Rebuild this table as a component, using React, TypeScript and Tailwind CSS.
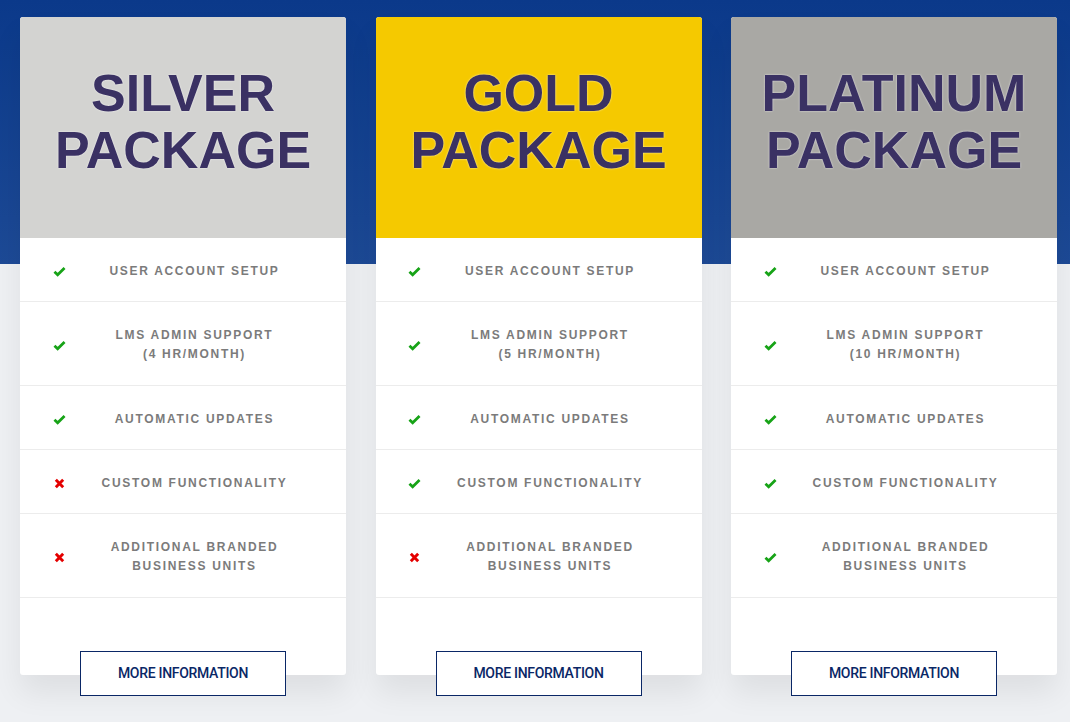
type Feature = { label: string[]; ok: boolean };

const packages = [
  {
    name: 'SILVER',
    bg: 'bg-[#d3d3d1]',
    hours: '4',
    custom: false,
    branded: false,
  },
  {
    name: 'GOLD',
    bg: 'bg-[#f5c900]',
    hours: '5',
    custom: true,
    branded: false,
  },
  {
    name: 'PLATINUM',
    bg: 'bg-[#a9a8a4]',
    hours: '10',
    custom: true,
    branded: true,
  },
];

function CheckIcon() {
  return (
    <svg viewBox="0 0 14 12" className="w-[13px] h-[11px]">
      <path d="M1.5 6.2 L5 9.6 L12.5 2.2" fill="none" stroke="#17a317" strokeWidth="3" strokeLinejoin="miter" />
    </svg>
  );
}

function CrossIcon() {
  return (
    <svg viewBox="0 0 12 12" className="w-[11px] h-[11px]">
      <path d="M2 2 L10 10 M10 2 L2 10" fill="none" stroke="#e40000" strokeWidth="3.2" />
    </svg>
  );
}

function FeatureRow({ feature, tall }: { feature: Feature; tall: boolean }) {
  return (
    <div
      className={`flex items-center pl-[30px] pr-[25px] pt-[3px] border-b border-[#ececec] ${
        tall ? 'h-[84px]' : 'h-[64px]'
      }`}
    >
      <div className="w-[18px] flex justify-center">
        {feature.ok ? <CheckIcon /> : <CrossIcon />}
      </div>
      <div className="flex-1 text-center text-[12px] leading-[19px] font-bold tracking-[1.7px] text-[#7b7b7b]">
        {feature.label.map((l) => (
          <div key={l}>{l}</div>
        ))}
      </div>
    </div>
  );
}

export default function App() {
  return (
    <div
      className="min-h-[722px] w-[1070px] bg-[linear-gradient(to_bottom,#0b398a_0px,#1d4a96_264px,#eef0f3_264px)] pt-[17px] pl-[20px] overflow-hidden"
      style={{ fontFamily: '"Liberation Sans", Arial, sans-serif' }}
    >
      <div className="flex gap-[29.5px]">
        {packages.map((p) => {
          const features: Feature[] = [
            { label: ['USER ACCOUNT SETUP'], ok: true },
            { label: ['LMS ADMIN SUPPORT', `(${p.hours} HR/MONTH)`], ok: true },
            { label: ['AUTOMATIC UPDATES'], ok: true },
            { label: ['CUSTOM FUNCTIONALITY'], ok: p.custom },
            { label: ['ADDITIONAL BRANDED', 'BUSINESS UNITS'], ok: p.branded },
          ];
          return (
            <div
              key={p.name}
              className="w-[326px] bg-white rounded-[3px] shadow-[0_18px_30px_rgba(0,0,0,0.07)] flex flex-col"
            >
              {/* Header */}
              <div
                className={`${p.bg} h-[221px] rounded-t-[3px] flex flex-col items-center justify-center pb-[12px] text-[#3a3163] font-bold text-[52px] leading-[57px] [text-shadow:0_0_2px_rgba(255,255,255,0.8)]`}
              >
                <div>{p.name}</div>
                <div>PACKAGE</div>
              </div>

              {/* Features */}
              {features.map((f) => (
                <FeatureRow key={f.label[0]} feature={f} tall={f.label.length > 1} />
              ))}

              {/* Action */}
              <div className="flex justify-center pt-[53px] -mb-[21px]">
                <button
                  className="w-[206px] h-[45px] bg-white border border-[#0a2766] text-[#0a2766] text-[14px] font-medium tracking-[-0.3px]"
                  style={{ fontFamily: 'Roboto, "Liberation Sans", sans-serif' }}
                >
                  MORE INFORMATION
                </button>
              </div>
            </div>
          );
        })}
      </div>
    </div>
  );
}
